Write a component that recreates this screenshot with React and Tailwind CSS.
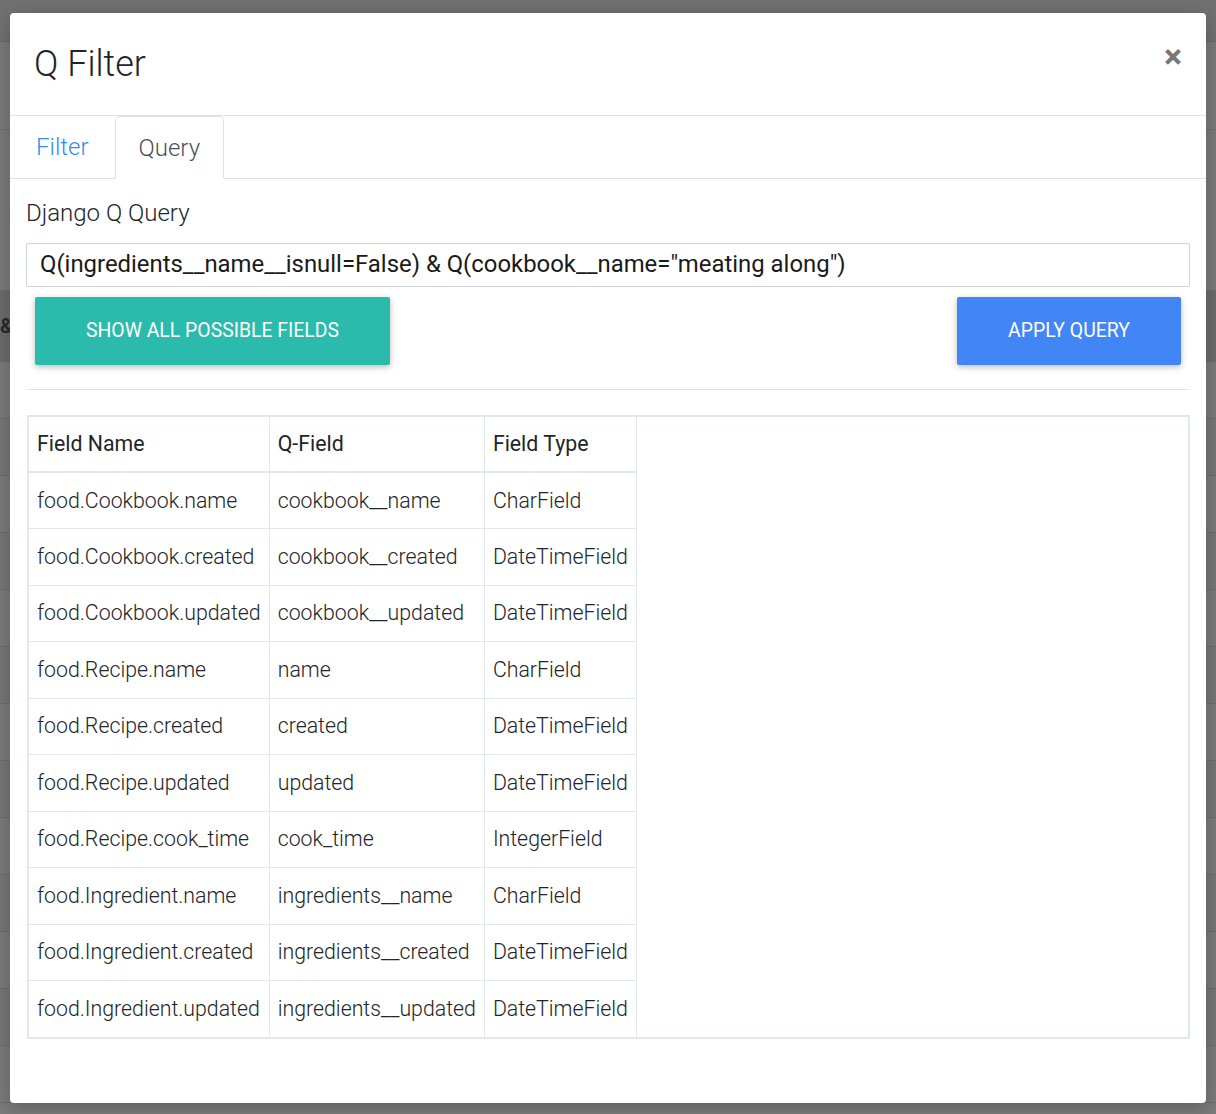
import React from "react";

const rows = [
  ["food.Cookbook.name", "cookbook__name", "CharField"],
  ["food.Cookbook.created", "cookbook__created", "DateTimeField"],
  ["food.Cookbook.updated", "cookbook__updated", "DateTimeField"],
  ["food.Recipe.name", "name", "CharField"],
  ["food.Recipe.created", "created", "DateTimeField"],
  ["food.Recipe.updated", "updated", "DateTimeField"],
  ["food.Recipe.cook_time", "cook_time", "IntegerField"],
  ["food.Ingredient.name", "ingredients__name", "CharField"],
  ["food.Ingredient.created", "ingredients__created", "DateTimeField"],
  ["food.Ingredient.updated", "ingredients__updated", "DateTimeField"],
];

const BackdropPage = () => (
  <div className="flex flex-col w-full">
    <div className="h-[42px] bg-[#727272] border-b border-[#6a6a6a]"></div>
    <div className="h-[88px] bg-[#7b7b7b] border-b border-[#727272]"></div>
    <div className="h-[160px] bg-[#7b7b7b]"></div>
    <div className="h-[72px] bg-[#6c6c6c] flex items-center px-0 text-[20px] font-bold text-[#2a2a2a]">
      &amp;
    </div>
    {Array.from({ length: 13 }).map((_, i) => (
      <div
        key={i}
        className={`h-[57px] border-b border-[#6e6e6e] ${i % 2 === 0 ? "bg-[#7b7b7b]" : "bg-[#777777]"}`}
      ></div>
    ))}
  </div>
);

export default function App() {
  return (
    <div className="relative w-[1216px] h-[1114px] overflow-hidden bg-[#7b7b7b] font-['Roboto','Liberation_Sans',sans-serif]">
      <BackdropPage />

      <div className="absolute left-[10px] top-[13px] w-[1196px] h-[1090px] bg-white rounded-[4px] shadow-[0_4px_20px_rgba(0,0,0,0.25)] flex flex-col">
        {/* header */}
        <div className="h-[103px] border-b border-[#dee2e6] flex items-start justify-between pl-[24px] pr-[24px]">
          <h1 className="mt-[27px] text-[36px] leading-[48px] font-light text-[#212529]">
            Q Filter
          </h1>
          <button className="mt-[26px] text-[34px] leading-[34px] font-bold text-[#777777]">
            ×
          </button>
        </div>

        {/* tabs */}
        <div className="h-[63px] border-b border-[#dee2e6] flex items-end pt-[1px]">
          <div className="h-[62px] px-[26px] flex items-center text-[24px] font-light text-[#2f8df2]">
            Filter
          </div>
          <div className="h-[63px] -mb-px px-[23px] flex items-center bg-white border border-[#dee2e6] border-b-white rounded-t-[5px] text-[24px] font-light text-[#495057]">
            Query
          </div>
        </div>

        {/* content */}
        <div className="flex flex-col px-[16px] pt-[18px]">
          <label className="text-[24px] leading-[32px] font-light text-[#212529]">
            Django Q Query
          </label>
          <div className="mt-[14px] h-[44px] border border-[#ced4da] rounded-[2px] flex items-center px-[13px] text-[23.9px] text-[#1a1a1a]">
            Q(ingredients__name__isnull=False) &amp; Q(cookbook__name="meating along")
          </div>

          <div className="mt-[10px] flex justify-between px-[9px]">
            <button className="w-[355px] h-[68px] rounded-[2px] bg-[#2bbbad] text-white text-[19.4px] font-normal uppercase shadow-[0_2px_5px_rgba(0,0,0,0.16),0_2px_10px_rgba(0,0,0,0.12)]">
              Show all possible fields
            </button>
            <button className="w-[224px] h-[68px] rounded-[2px] bg-[#4285f4] text-white text-[19.4px] font-normal uppercase shadow-[0_2px_5px_rgba(0,0,0,0.16),0_2px_10px_rgba(0,0,0,0.12)]">
              Apply Query
            </button>
          </div>

          <div className="mt-[24px] h-px bg-[#e2e2e2]"></div>

          <div className="mt-[25px] ml-[1px] border-2 border-[#e3e6ea] flex">
            <table className="border-collapse text-[21.3px] text-[#212529]">
              <thead>
                <tr className="border-b-2 border-[#e3e6ea]">
                  <th className="h-[55px] px-[8px] text-left font-normal border-r border-[#e3e6ea]">
                    Field Name
                  </th>
                  <th className="h-[55px] px-[8px] text-left font-normal border-r border-[#e3e6ea]">
                    Q-Field
                  </th>
                  <th className="h-[55px] px-[8px] text-left font-normal border-r border-[#e3e6ea]">
                    Field Type
                  </th>
                </tr>
              </thead>
              <tbody>
                {rows.map((r, i) => (
                  <tr key={i} className={i < rows.length - 1 ? "border-b border-[#e3e6ea]" : ""}>
                    {r.map((c, j) => (
                      <td
                        key={j}
                        className="h-[56.5px] px-[8px] font-light whitespace-nowrap border-r border-[#e3e6ea]"
                      >
                        {c}
                      </td>
                    ))}
                  </tr>
                ))}
              </tbody>
            </table>
          </div>
        </div>
      </div>
    </div>
  );
}
